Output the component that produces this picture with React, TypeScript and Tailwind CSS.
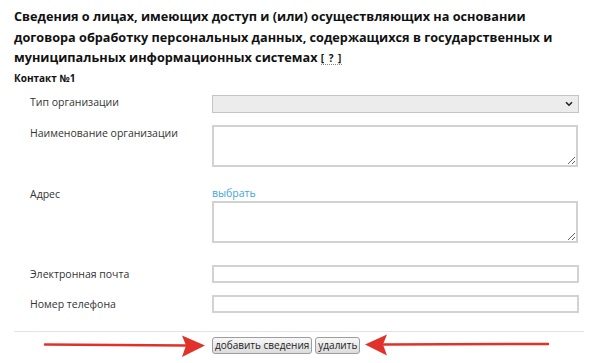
import React from 'react';

const font = { fontFamily: '"Open Sans", "DejaVu Sans", sans-serif' };

const Label: React.FC<{ children: React.ReactNode }> = ({ children }) => (
  <div className="pl-[16px] text-[10.5px] leading-[16px] text-[#333]">{children}</div>
);

export default function App() {
  return (
    <div className="relative w-[600px] h-[363px] overflow-hidden bg-white" style={font}>
      <div className="px-[14px] pt-[6px]">
        <h1 className="text-[12.7px] leading-[20.5px] font-bold text-[#111] w-[545px]">
          Сведения о лицах, имеющих доступ и (или) осуществляющих на основании договора
          обработку персональных данных, содержащихся в государственных и муниципальных
          информационных системах{' '}
          <span className="inline-block text-[10px] leading-[11px] border-b border-dotted border-[#888] tracking-[1px]">[ ? ]</span>
        </h1>

        <div className="mt-[3px] text-[10px] leading-[14px] font-bold text-[#111]">Контакт №1</div>

        {/* Form rows */}
        <div className="grid grid-cols-[198px_367px] mt-[10px]">
          <div className="-mt-[1px]">
            <Label>Тип организации</Label>
          </div>
          <div className="relative">
            <select className="appearance-none block w-full h-[18px] bg-[#ececec] border border-[#c4c4c4] rounded-none outline-none" />
            <svg className="absolute right-[6px] top-[6px]" width="8" height="6" viewBox="0 0 8 6">
              <path d="M1 1.2 L4 4.2 L7 1.2" fill="none" stroke="#222" strokeWidth="1.6" />
            </svg>
          </div>

          <div className="mt-[12px]">
            <Label>Наименование организации</Label>
          </div>
          <div className="mt-[12px]">
            <textarea className="block w-[366px] h-[42px] border-2 border-[#d2d2d2] outline-none" />
          </div>

          <div className="mt-[19px]">
            <Label>Адрес</Label>
          </div>
          <div className="mt-[19px]">
            <a className="block text-[10.5px] leading-[15px] text-[#43a6dc]">выбрать</a>
            <textarea className="block w-[366px] h-[42px] border-2 border-[#d2d2d2] outline-none" />
          </div>

          <div className="mt-[22px] pt-[1px]">
            <Label>Электронная почта</Label>
          </div>
          <div className="mt-[22px]">
            <input className="block w-full h-[18px] border-2 border-[#d2d2d2] outline-none" />
          </div>

          <div className="mt-[12px] pt-[1px]">
            <Label>Номер телефона</Label>
          </div>
          <div className="mt-[12px]">
            <input className="block w-full h-[18px] border-2 border-[#d2d2d2] outline-none" />
          </div>
        </div>

        <div className="mt-[18px] w-[570px] border-t border-[#e2e2e2]" />

        <div className="mt-[5px] pl-[198px] flex gap-[3px]">
          <button className="h-[17px] px-[2px] text-[10px] leading-[15px] text-[#222] border border-[#9e9e9e] rounded-[3px] bg-gradient-to-b from-[#f8f8f8] to-[#dcdcdc]">
            добавить сведения
          </button>
          <button className="h-[17px] px-[2px] text-[10px] leading-[15px] text-[#222] border border-[#9e9e9e] rounded-[3px] bg-gradient-to-b from-[#f8f8f8] to-[#dcdcdc]">
            удалить
          </button>
        </div>
      </div>

      {/* annotation arrows */}
      <svg className="absolute left-0 top-0 pointer-events-none" width="600" height="363" viewBox="0 0 600 363">
        <path d="M45 344.5 L186 345.5" stroke="#e0322b" strokeWidth="2.5" strokeLinecap="round" />
        <path d="M205 345.5 L182 335.5 L186 345.5 L182 357 Z" fill="#e0322b" />
        <path d="M548 344 L384 344.5" stroke="#e0322b" strokeWidth="2.5" strokeLinecap="round" />
        <path d="M365 344.5 L387 334.5 L383 344.5 L387 355.5 Z" fill="#e0322b" />
      </svg>
    </div>
  );
}
